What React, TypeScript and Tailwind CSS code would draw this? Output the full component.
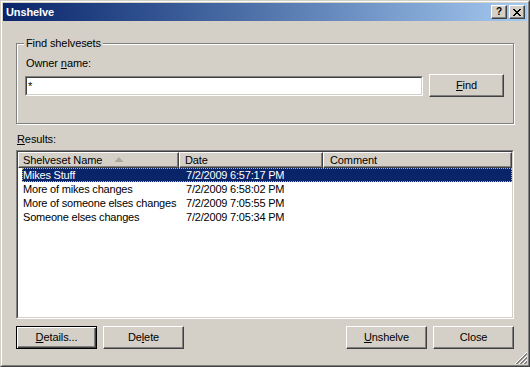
import React from 'react';

const raised =
  'border border-t-white border-l-white border-r-[#404040] border-b-[#404040] shadow-[inset_-1px_-1px_0_#808080] bg-[#d4d0c8]';

const rows = [
  { name: 'Mikes Stuff', date: '7/2/2009 6:57:17 PM', selected: true },
  { name: 'More of mikes changes', date: '7/2/2009 6:58:02 PM' },
  { name: 'More of someone elses changes', date: '7/2/2009 7:05:55 PM' },
  { name: 'Someone elses changes', date: '7/2/2009 7:05:34 PM' },
];

function Btn({ children, def }: { children: React.ReactNode; def?: boolean }) {
  return (
    <button
      className={
        def
          ? 'w-[81px] h-[23px] border border-black bg-[#d4d0c8] shadow-[inset_1px_1px_0_#fff,inset_-1px_-1px_0_#404040,inset_-2px_-2px_0_#808080] flex items-center justify-center'
          : `w-[81px] h-[23px] ${raised} flex items-center justify-center`
      }
    >
      {children}
    </button>
  );
}

function SizeGrip() {
  const lines = [0, 4, 8];
  return (
    <svg width="12" height="12" viewBox="0 0 12 12" shapeRendering="crispEdges" className="absolute right-0 bottom-0">
      {lines.map((k) => (
        <g key={k}>
          <line x1={12} y1={k} x2={k} y2={12} stroke="#ffffff" />
          <line x1={12} y1={k + 1} x2={k + 1} y2={12} stroke="#808080" />
          <line x1={12} y1={k + 2} x2={k + 2} y2={12} stroke="#808080" />
        </g>
      ))}
    </svg>
  );
}

export default function App() {
  return (
    <div className="w-[530px] h-[367px] border border-t-[#d4d0c8] border-l-[#d4d0c8] border-r-[#404040] border-b-[#404040] bg-[#d4d0c8] font-['Liberation_Sans',Arial,sans-serif] text-[11px] tracking-[-0.1px] text-black select-none">
      <div className="h-full border border-t-white border-l-white border-r-[#808080] border-b-[#808080] p-px flex flex-col">
        {/* Title bar */}
        <div className="h-[18px] flex items-center justify-between bg-gradient-to-r from-[#0a246a] to-[#a6caf0] pl-[3px] pr-[2px]">
          <span className="text-white font-bold text-[11px] leading-[18px]">Unshelve</span>
          <div className="flex gap-[2px]">
            <div className={`w-[16px] h-[14px] ${raised} flex items-center justify-center`}>
              <span className="font-bold text-[10px] leading-none -mt-px">?</span>
            </div>
            <div className={`w-[16px] h-[14px] ${raised} flex items-center justify-center`}>
              <svg width="8" height="7" viewBox="0 0 8 7" shapeRendering="crispEdges">
                <path d="M0 0h2v1h1v1h2V1h1V0h2v1H7v1H6v1H5v1h1v1h1v1h1v1H6V6H5V5H3v1H2v1H0V6h1V5h1V4h1V3H2V2H1V1H0z" fill="#000" />
              </svg>
            </div>
          </div>
        </div>

        {/* Body */}
        <div className="relative flex-1 flex flex-col px-[13px] pt-[22px] pb-[15px]">
          {/* Group box */}
          <div className="relative h-[81px] shrink-0 border border-[#808080] shadow-[1px_1px_0_#fff,inset_1px_1px_0_#fff] pt-[13px] pl-[8px] pr-[9px]">
            <span className="absolute -top-[7px] left-[7px] px-[2px] bg-[#d4d0c8] leading-[13px]">Find shelvesets</span>
            <div className="leading-[13px] pl-[1px]">
              Owner <span className="underline">n</span>ame:
            </div>
            <div className="mt-[4px] flex items-center gap-[6px]">
              <div className="flex-1 h-[20px] border border-t-[#808080] border-l-[#808080] border-r-white border-b-white">
                <div className="h-full border border-t-[#404040] border-l-[#404040] border-r-[#d4d0c8] border-b-[#d4d0c8] bg-white pl-[1px] leading-[16px]">
                  *
                </div>
              </div>
              <button className={`w-[75px] h-[23px] ${raised} flex items-center justify-center`}>
                <span>
                  <span className="underline">F</span>ind
                </span>
              </button>
            </div>
          </div>

          <div className="mt-[9px] leading-[13px] pl-[1px]">
            <span className="underline">R</span>esults:
          </div>

          {/* List view */}
          <div className="mt-[4px] flex-1 border border-t-[#808080] border-l-[#808080] border-r-white border-b-white">
            <div className="h-full border border-t-[#404040] border-l-[#404040] border-r-[#d4d0c8] border-b-[#d4d0c8] bg-white flex flex-col">
              <div className="flex h-[16px] shrink-0">
                <div className={`w-[161px] ${raised} flex items-center pl-[4px] leading-[14px]`}>
                  <span>Shelveset Name</span>
                  <svg width="10" height="6" viewBox="0 0 10 6" className="ml-[12px]">
                    <polygon points="5,0 9.5,5 0.5,5" fill="#aca899" />
                  </svg>
                </div>
                <div className={`w-[144px] ${raised} flex items-center pl-[5px] leading-[14px]`}>Date</div>
                <div className={`flex-1 ${raised} flex items-center pl-[6px] leading-[14px]`}>Comment</div>
              </div>
              {rows.map((r) => (
                <div
                  key={r.name}
                  className={`ml-[4px] flex h-[14px] leading-[12px] tracking-[-0.2px] border ${
                    r.selected ? 'bg-[#0a246a] text-white border-dotted border-[#b8b890]' : 'border-transparent'
                  }`}
                >
                  <div className="w-[157px] whitespace-nowrap overflow-hidden">{r.name}</div>
                  <div className="w-[144px] pl-[6px] whitespace-nowrap">{r.date}</div>
                  <div className="flex-1" />
                </div>
              ))}
            </div>
          </div>

          {/* Buttons */}
          <div className="mt-[7px] flex justify-between">
            <div className="flex gap-[6px]">
              <Btn def>
                <span>
                  <span className="underline">D</span>etails...
                </span>
              </Btn>
              <Btn>
                <span>
                  De<span className="underline">l</span>ete
                </span>
              </Btn>
            </div>
            <div className="flex gap-[6px]">
              <Btn>
                <span>
                  <span className="underline">U</span>nshelve
                </span>
              </Btn>
              <Btn>Close</Btn>
            </div>
          </div>

          <SizeGrip />
        </div>
      </div>
    </div>
  );
}
